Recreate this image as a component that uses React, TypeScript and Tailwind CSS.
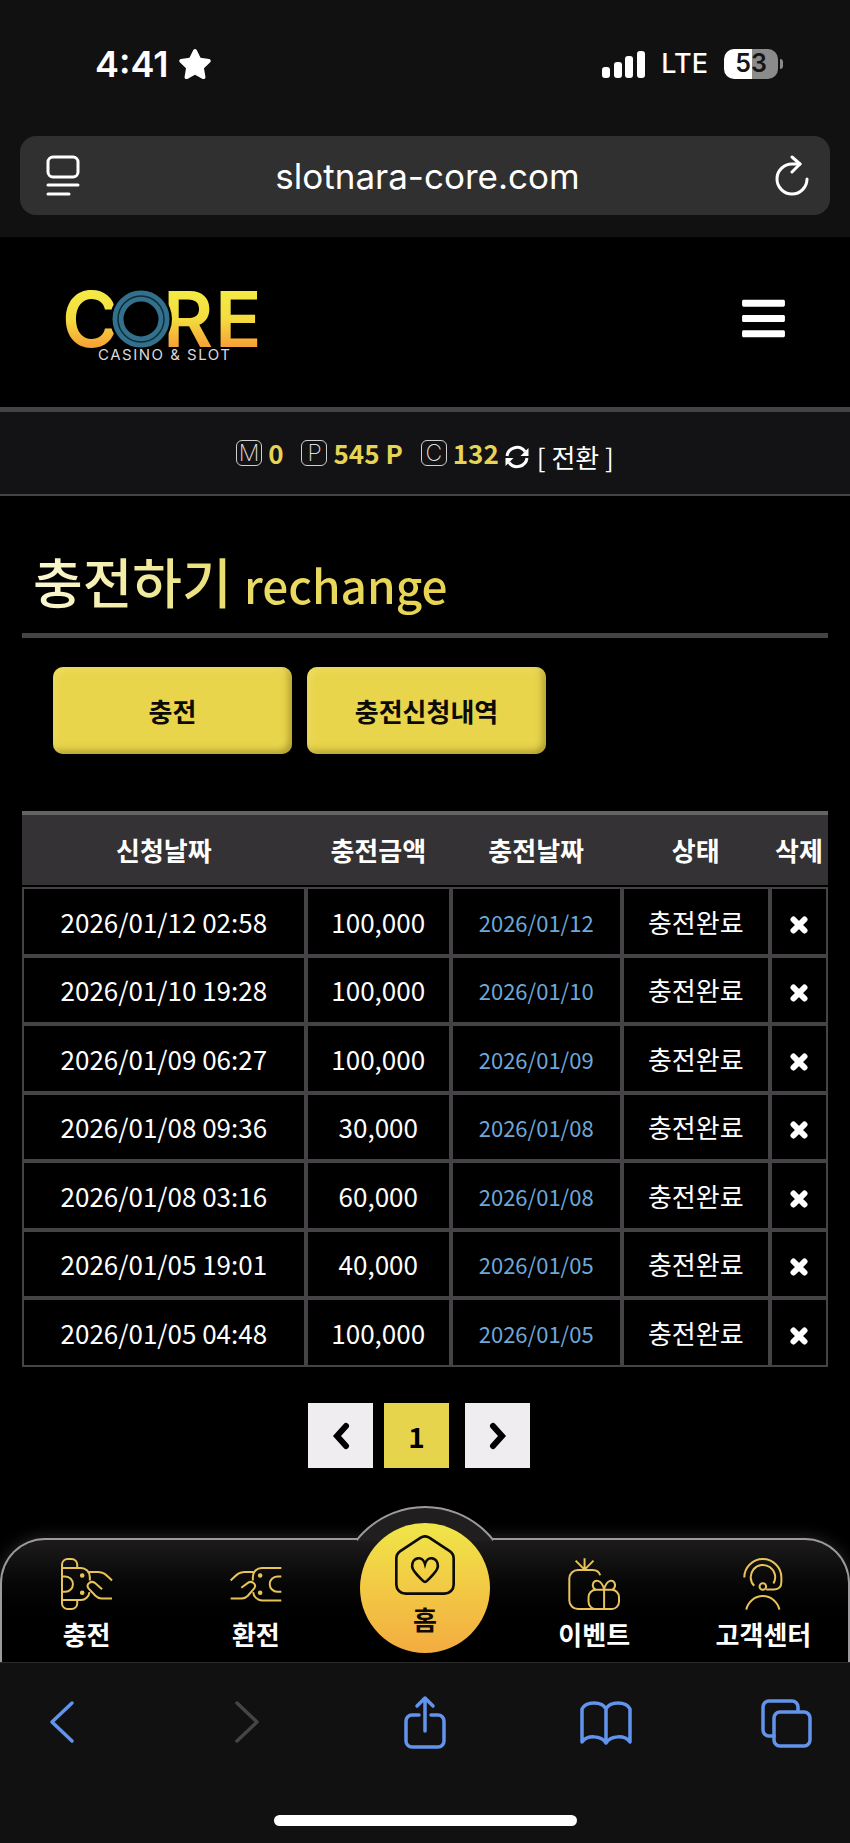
import type { ReactNode } from "react";
import { FaBars, FaStar } from "react-icons/fa";

const rows = [
  { requested: "2026/01/12 02:58", amount: "100,000", charged: "2026/01/12" },
  { requested: "2026/01/10 19:28", amount: "100,000", charged: "2026/01/10" },
  { requested: "2026/01/09 06:27", amount: "100,000", charged: "2026/01/09" },
  { requested: "2026/01/08 09:36", amount: "30,000", charged: "2026/01/08" },
  { requested: "2026/01/08 03:16", amount: "60,000", charged: "2026/01/08" },
  { requested: "2026/01/05 19:01", amount: "40,000", charged: "2026/01/05" },
  { requested: "2026/01/05 04:48", amount: "100,000", charged: "2026/01/05" },
];

export default function App() {
  return (
    <div className="flex min-h-screen flex-col overflow-hidden bg-black font-['Noto_Sans_CJK_KR','Noto_Sans',sans-serif] text-white">
      <BrowserTop />
      <SiteHeader />
      <Balances />
      <main className="px-[22px]">
        <h1 className="border-b-[5px] border-[#454345] pl-[11px] pt-[49px] font-medium leading-[72px]">
          <span className="inline-block bg-linear-to-r from-[#fbf8d4] via-[#e9dc66] to-[#e8d34f] bg-clip-text text-transparent">
            <span className="text-[54px]">충전하기 </span>
            <span className="text-[46px]">rechange</span>
          </span>
        </h1>
        <div className="mt-[29px] flex gap-[15px] pl-[31px]">
          <TabButton>충전</TabButton>
          <TabButton>충전신청내역</TabButton>
        </div>
        <History />
        <Pagination />
      </main>
      <BottomNav />
      <BrowserBottom />
    </div>
  );
}

/* ── Phone status + address bar ── */
function BrowserTop() {
  return (
    <div className="bg-[#111111] px-5 pb-[22px] font-[Inter,sans-serif]">
      <div className="flex h-[136px] items-center justify-between pb-2 pl-[75px] pr-[47px]">
        <div className="flex items-center gap-[9px]">
          <span className="text-[36px] font-semibold leading-10">4:41</span>
          <FaStar size={34} />
        </div>
        <div className="flex items-center">
          <svg width="43" height="27" viewBox="0 0 43 27" fill="#fff">
            <rect x="0" y="16" width="8" height="11" rx="3" />
            <rect x="12" y="11" width="8" height="16" rx="3" />
            <rect x="23" y="5" width="8" height="22" rx="3" />
            <rect x="35" y="0" width="8" height="27" rx="3" />
          </svg>
          <span className="ml-4 text-[27px] font-medium leading-8">LTE</span>
          <span className="ml-4 flex h-[30px] w-[54px] items-center justify-center rounded-[10px] bg-linear-to-r from-white from-52% to-[#8b8b8b] to-52% text-[25px] font-semibold text-[#151515]">
            53
          </span>
          <span className="ml-0.5 h-2.5 w-[3px] rounded-r-full bg-[#8b8b8b]" />
        </div>
      </div>
      <div className="flex h-[79px] items-center justify-between rounded-[16px] bg-[#303030] pl-[25px] pr-5">
        <button aria-label="페이지 설정">
          <svg width="36" height="42" viewBox="0 0 36 42" fill="none" stroke="#fff" strokeWidth="3" strokeLinecap="round">
            <rect x="3" y="2" width="30" height="20" rx="5" />
            <path d="M3 30H33M3 39H24" />
          </svg>
        </button>
        <span className="text-[35px] leading-10">slotnara-core.com</span>
        <button aria-label="새로고침">
          <svg width="36" height="42" viewBox="0 0 36 42" fill="none" stroke="#fff" strokeWidth="3" strokeLinecap="round" strokeLinejoin="round">
            <path d="M33 24A15 15 0 1 1 18 9H26" />
            <path d="M18 2L26 9L18 17" />
          </svg>
        </button>
      </div>
    </div>
  );
}

function SiteHeader() {
  return (
    <header className="flex h-[170px] items-center justify-between pb-2 pl-[66px] pr-[62px]">
      <a href="#" aria-label="CORE CASINO & SLOT">
        <svg width="194" height="84" viewBox="0 0 194 84" className="overflow-visible">
          <defs>
            <linearGradient id="gold" x1="0" y1="15" x2="0" y2="71" gradientUnits="userSpaceOnUse">
              <stop offset="0" stopColor="#f3ea45" />
              <stop offset="0.5" stopColor="#f4dc3e" />
              <stop offset="1" stopColor="#f6a136" />
            </linearGradient>
          </defs>
          <g fill="url(#gold)" fontFamily="Inter, sans-serif" fontWeight="600" fontSize="77">
            <text x="-4" y="71">C</text>
            <text x="97" y="71">R</text>
            <text x="149" y="71">E</text>
          </g>
          <circle cx="75" cy="43" r="31" fill="#000" />
          <circle cx="75" cy="43" r="23" fill="none" stroke="#32708c" strokeWidth="11" />
          <circle cx="75" cy="43" r="23" fill="none" stroke="#0e2c3c" strokeWidth="1.5" />
          <text x="32" y="84" fill="#d9d9d9" fontFamily="Inter, sans-serif" fontSize="15" className="tracking-widest">
            CASINO &amp; SLOT
          </text>
        </svg>
      </a>
      <button aria-label="메뉴">
        <FaBars size={49} />
      </button>
    </header>
  );
}

function Balances() {
  return (
    <section className="flex items-center justify-center border-b-2 border-t-[5px] border-[#454345] bg-[#131214] text-[26px] leading-[82px]">
      <Balance letter="M" value="0" />
      <Balance letter="P" value="545 P" />
      <Balance letter="C" value="132" last />
      <button className="ml-[6px] mt-2 flex items-center gap-2 text-[26px] leading-8">
        <svg width="24" height="24" viewBox="0 0 24 24" fill="none" stroke="#fff" strokeWidth="3">
          <path d="M2 11A10 10 0 0 1 20 6.500" />
          <path d="M22 13A10 10 0 0 1 4 17.500" />
          <path d="M23.500 3V11H15.500Z" fill="#fff" stroke="none" />
          <path d="M0.500 21V13H8.500Z" fill="#fff" stroke="none" />
        </svg>
        [ 전환 ]
      </button>
    </section>
  );
}

function Balance({ letter, value, last }: { letter: string; value: string; last?: boolean }) {
  return (
    <span className={last ? "flex items-center" : "mr-[18px] flex items-center"}>
      <span className="flex h-[26px] w-[26px] items-center justify-center rounded-[6px] border border-[#cfcfcf] font-[Inter,sans-serif] text-[23px] font-extralight leading-6 text-[#dddddd]">
        {letter}
      </span>
      <b className="ml-[6px] font-bold text-[#e6d455]">{value}</b>
    </span>
  );
}

function TabButton({ children }: { children: ReactNode }) {
  return (
    <button className="h-[87px] w-[239px] rounded-[10px] bg-[#e9d54c] text-[26px] font-bold text-[#0d0b05] shadow-[inset_3px_3px_6px_rgba(255,240,140,0.4),inset_-3px_-3px_7px_rgba(110,95,10,0.5)]">
      {children}
    </button>
  );
}

/* ── Recharge history ── */
function History() {
  return (
    <table className="mt-[57px] w-full table-fixed border-separate border-spacing-0 text-center text-[26px] leading-8">
      <colgroup>
        <col className="w-[35.2%]" />
        <col className="w-[18%]" />
        <col className="w-[21.2%]" />
        <col className="w-[18.4%]" />
        <col className="w-[7.2%]" />
      </colgroup>
      <thead>
        <tr className="h-[76px]">
          {["신청날짜", "충전금액", "충전날짜", "상태", "삭제"].map((label) => (
            <th
              key={label}
              className="whitespace-nowrap border-b-2 border-t-4 border-b-black border-t-[#646265] bg-[#343234] bg-clip-padding p-0 font-bold"
            >
              {label}
            </th>
          ))}
        </tr>
      </thead>
      <tbody>
        {rows.map((row) => (
          <tr
            key={row.requested}
            className="h-[68px] odd:h-[69px] *:border-2 *:border-[#454345] *:p-0"
          >
            <td>{row.requested}</td>
            <td>{row.amount}</td>
            <td className="text-[22px] text-[#6fa8d8]">{row.charged}</td>
            <td>충전완료</td>
            <td>
              <button aria-label="삭제" className="block w-full pt-1.5">
                <svg className="mx-auto" width="18" height="18" viewBox="0 0 18 18" stroke="#fff" strokeWidth="6" strokeLinecap="round">
                  <path d="M3.500 3.500L14.500 14.500M14.500 3.500L3.500 14.500" />
                </svg>
              </button>
            </td>
          </tr>
        ))}
      </tbody>
    </table>
  );
}

function Pagination() {
  return (
    <div className="mt-9 flex justify-center pr-3 text-black">
      <button aria-label="이전" className="flex size-[65px] items-center justify-center bg-[#efedf0]">
        <Chevron d="M14 4L5 14L14 24" />
      </button>
      <button className="ml-[11px] mr-4 size-[65px] bg-[#e6d54c] text-[28px] font-bold">1</button>
      <button aria-label="다음" className="flex size-[65px] items-center justify-center bg-[#efedf0]">
        <Chevron d="M4 4L13 14L4 24" />
      </button>
    </div>
  );
}

function Chevron({ d }: { d: string }) {
  return (
    <svg width="18" height="28" viewBox="0 0 18 28" fill="none" stroke="#000" strokeWidth="6" strokeLinecap="round">
      <path d={d} />
    </svg>
  );
}

/* ── Site bottom menu ── */
function BottomNav() {
  return (
    <nav className="relative mt-auto flex h-[124px] rounded-t-[45px] border-x-2 border-t-2 border-[#9c9a9c] bg-linear-to-b from-[#1d1b1c] to-black to-85% text-[26px] font-bold leading-8 shadow-[0_0_16px_rgba(255,255,255,0.16)]">
      {/* raised arc behind the home button */}
      <div className="absolute -top-[34px] left-1/2 h-[35px] w-[136px] -translate-x-1/2 overflow-hidden">
        <div className="-ml-5 size-44 rounded-full border-2 border-[#9c9a9c] bg-[#201e1f]" />
      </div>
      <NavItem label="충전">
        <path d="M3 30V20A17 17 0 0 1 20 3H32A17 17 0 0 1 49 20V30" />
        <path d="M3 127V137A17 17 0 0 0 20 154H32A17 17 0 0 0 49 137V127" />
        <path d="M87 68V57A27 27 0 0 0 60 30H3V127H60A27 27 0 0 0 86 103" />
        <path d="M3 56H13A23 23 0 0 1 13 102H3" />
        <path d="M84 42H112C130 42 138 53 154 68" />
        <path d="M124 94L102 75C91 67 74 79 83 92L104 114C110 120 115 122 122 122H154" />
        <circle cx="64" cy="53" r="4" fill="#e8c35a" />
        <circle cx="64" cy="105" r="4" fill="#e8c35a" />
      </NavItem>
      <NavItem label="환전">
        <path d="M155 30H96A27 27 0 0 0 69 57V68" />
        <path d="M70 103A27 27 0 0 0 96 128H155" />
        <path d="M155 56H143A23 23 0 0 0 143 102H155" />
        <path d="M2 68C18 53 26 42 44 42H72" />
        <path d="M34 90L54 75C65 67 82 79 73 92L54 114C48 120 42 122 36 122H2" />
        <circle cx="91" cy="53" r="4" fill="#e8c35a" />
        <circle cx="91" cy="105" r="4" fill="#e8c35a" />
      </NavItem>
      <div className="relative flex flex-1 justify-center">
        <a
          href="#"
          className="absolute -top-[17px] flex size-[130px] flex-col items-center rounded-full bg-linear-to-b from-[#efe648] to-[#f3ac40] pt-3 text-[#0d0b05]"
        >
          <svg width="60" height="60" viewBox="0 0 182 182" fill="none" stroke="#0d0b05" strokeWidth="8">
            <path d="M4 72V150A28 28 0 0 0 32 178H150A28 28 0 0 0 178 150V72Q178 57 166 49L104 8Q91 0 78 8L16 49Q4 57 4 72Z" />
            <path d="M91 88C84 62 51 66 52 96C53 110 74 128 85 139Q91 145 97 139C108 128 129 110 130 96C131 66 98 62 91 88Z" />
          </svg>
          <span className="mt-2 leading-8">홈</span>
        </a>
      </div>
      <NavItem label="이벤트">
        <path d="M50 1V35M23 8L50 35L77 8" />
        <path d="M97 52C94 40 87 36 74 36H30A26 26 0 0 0 4 62V128A26 26 0 0 0 30 154H84" />
        <rect x="62" y="96" width="92" height="58" rx="22" />
        <path d="M109 96V154" />
        <path d="M109 95C101 63 78 63 75 80C74 88 78 93 84 96" />
        <path d="M109 95C117 63 139 63 142 80C143 88 139 93 134 96" />
      </NavItem>
      <NavItem label="고객센터">
        <path d="M22 59A56 56 0 0 1 134 59V72C134 86 126 95 112 95H88" />
        <path d="M52 84A37 37 0 1 1 110 77" />
        <circle cx="78" cy="86" r="10" />
        <path d="M28 156A51 51 0 0 1 128 156" />
      </NavItem>
    </nav>
  );
}

function NavItem({ label, children }: { label: string; children: ReactNode }) {
  return (
    <a href="#" className="flex flex-1 flex-col items-center pt-[18px]">
      <svg width="52" height="52" viewBox="0 0 157 157" fill="none" stroke="#e8c35a" strokeWidth="6">
        {children}
      </svg>
      <span className="mt-2 whitespace-nowrap">{label}</span>
    </a>
  );
}

function BrowserBottom() {
  return (
    <div className="relative flex flex-col items-center border-t border-[#2b2b2b] bg-[#121112] pb-[17px] pt-8">
      <div className="flex w-full justify-between px-[38px]">
        <ToolButton label="뒤로">
          <path d="M34 8L14 27L34 46" />
        </ToolButton>
        <ToolButton label="앞으로" disabled>
          <path d="M18 8L38 27L18 46" />
        </ToolButton>
        <ToolButton label="공유">
          <path d="M20 20H13A6 6 0 0 0 7 26V46A6 6 0 0 0 13 52H39A6 6 0 0 0 45 46V26A6 6 0 0 0 39 20H32" />
          <path d="M26 36V3M18 11L26 3L34 11" />
        </ToolButton>
        <ToolButton label="책갈피">
          <path d="M26 14C22 6 6 6 2 14V47C7 40 21 40 26 48C31 40 45 40 50 47V14C46 6 30 6 26 14ZM26 14V48" />
        </ToolButton>
        <ToolButton label="탭">
          <path d="M14 41H9A6 6 0 0 1 3 35V12A6 6 0 0 1 9 6H32A6 6 0 0 1 38 12V16" />
          <rect x="14" y="17" width="36" height="34" rx="6" />
        </ToolButton>
      </div>
      <div className="mt-[66px] h-[11px] w-[303px] rounded-full bg-white" />
    </div>
  );
}

function ToolButton({ label, disabled, children }: { label: string; disabled?: boolean; children: ReactNode }) {
  return (
    <button aria-label={label} disabled={disabled} className="text-[#6294ee] disabled:text-[#454545]">
      <svg width="52" height="54" viewBox="0 0 52 54" fill="none" stroke="currentColor" strokeWidth="3.5" strokeLinecap="round" strokeLinejoin="round">
        {children}
      </svg>
    </button>
  );
}
